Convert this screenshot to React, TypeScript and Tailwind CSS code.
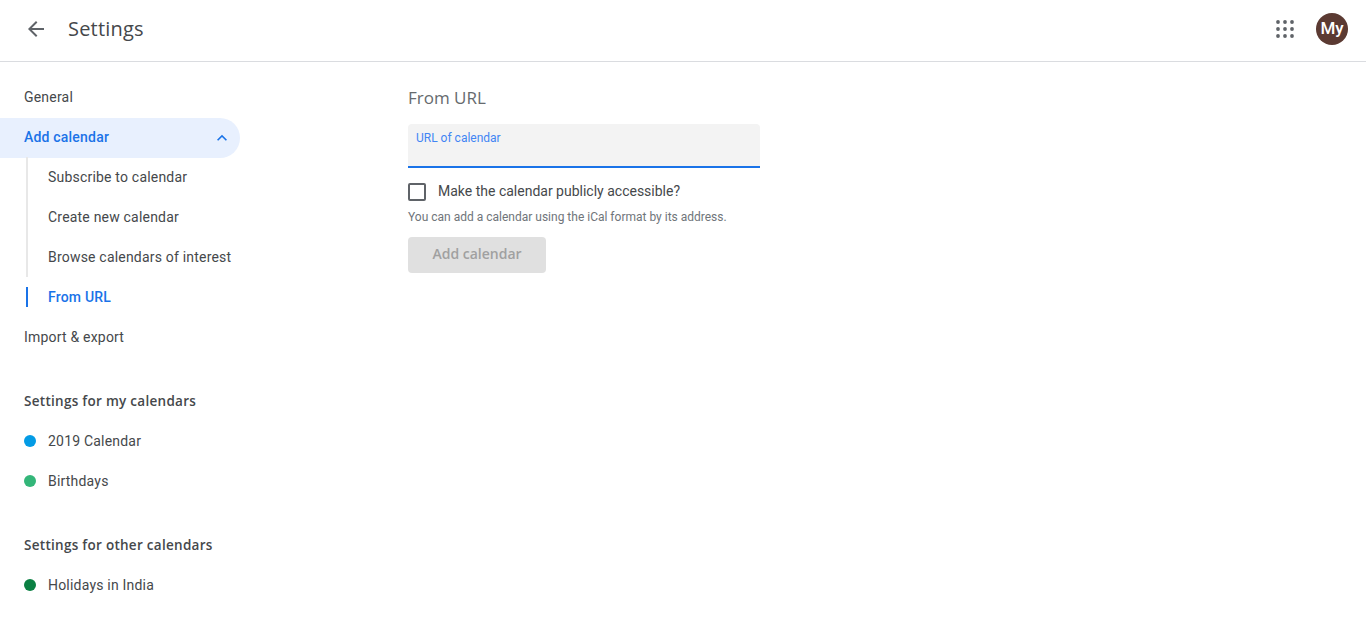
import React, { FC } from "react";

const NavLink: FC<{ label: string }> = ({ label }) => (
  <div className="flex h-10 w-60 items-center pl-6 text-[14px] tracking-[0.2px] text-[#45484b]">{label}</div>
);

const SubLink: FC<{ label: string; active?: boolean }> = ({ label, active }) => (
  <div className="flex h-10 items-center">
    <div className={active ? "h-5 w-0.5 bg-[#1a73e8]" : "h-10 w-0.5 bg-[#e8e8e8]"} />
    <span
      className={
        active
          ? "ml-5 text-[14px] font-medium tracking-[0.2px] text-[#1a73e8]"
          : "ml-5 text-[14px] tracking-[0.2px] text-[#45484b]"
      }
    >
      {label}
    </span>
  </div>
);

const SectionTitle: FC<{ label: string }> = ({ label }) => (
  <div className="mt-6 flex h-10 items-center pl-6 font-['Open_Sans',sans-serif] text-[13.5px] font-semibold tracking-[0.28px] text-[#45484b]">
    {label}
  </div>
);

const CalendarLink: FC<{ label: string; color: string }> = ({ label, color }) => (
  <div className="flex h-10 items-center pl-6 text-[14px] tracking-[0.2px] text-[#45484b]">
    <span className={`mr-3 h-3 w-3 rounded-full ${color}`} />
    {label}
  </div>
);

const AppsIcon: FC = () => (
  <svg width="18" height="18" viewBox="0 0 18 18" fill="#5f6368">
    {[2, 9, 16].map((y) =>
      [2, 9, 16].map((x) => <circle key={`${x}-${y}`} cx={x} cy={y} r="1.9" />)
    )}
  </svg>
);

export default function App() {
  return (
    <div className="h-[617px] w-[1366px] overflow-hidden bg-white font-['Roboto',sans-serif]">
      <header className="flex h-[62px] items-center border-b border-[#dadce0] pb-[3px] pl-6 pr-[18px]">
        <svg width="24" height="24" viewBox="0 0 24 24" fill="#5f6368">
          <path d="M20 11H7.83l5.59-5.59L12 4l-8 8 8 8 1.41-1.41L7.83 13H20v-2z" />
        </svg>
        <h1 className="ml-5 font-['Open_Sans',sans-serif] text-[20px] tracking-[0.2px] text-[#45484b]">Settings</h1>
        <div className="ml-auto flex items-center gap-[22px]">
          <AppsIcon />
          <div className="flex h-8 w-8 items-center justify-center rounded-full bg-[#5b3a32] text-[17px] font-medium text-white">
            My
          </div>
        </div>
      </header>

      <div className="flex">
        <nav className="w-[408px] shrink-0 pt-[15px]">
          <NavLink label="General" />
          <div className="mt-px flex h-10 w-60 items-center justify-between rounded-r-full bg-[#e8f0fe] pl-6 pr-2 text-[14px] font-medium tracking-[0.2px] text-[#1a73e8]">
            <span className="pb-0.5">Add calendar</span>
            <svg width="20" height="20" viewBox="0 0 24 24" fill="currentColor">
              <path d="M12 8l-6 6 1.41 1.41L12 10.83l4.59 4.58L18 14z" />
            </svg>
          </div>
          <div className="ml-[26px] -mt-px">
            <SubLink label="Subscribe to calendar" />
            <SubLink label="Create new calendar" />
            <SubLink label="Browse calendars of interest" />
            <SubLink label="From URL" active />
          </div>
          <NavLink label="Import & export" />
          <SectionTitle label="Settings for my calendars" />
          <CalendarLink label="2019 Calendar" color="bg-[#039be5]" />
          <CalendarLink label="Birthdays" color="bg-[#33b679]" />
          <SectionTitle label="Settings for other calendars" />
          <CalendarLink label="Holidays in India" color="bg-[#0b8043]" />
        </nav>

        <main className="w-[352px] pt-[24px]">
          <h2 className="font-['Open_Sans',sans-serif] text-[17px] leading-6 text-[#666a6e]">From URL</h2>
          <div className="mt-[14px] h-11 rounded-t border-b-2 border-[#1a73e8] bg-[#f3f3f3] px-2 pt-1.5 text-[12px] leading-4 text-[#4285f4]">
            URL of calendar
          </div>
          <label className="mt-[14px] flex h-5 items-center text-[14px] text-[#45484b]">
            <span className="mr-3 h-[18px] w-[18px] rounded-[2px] border-2 border-[#5f6368]" />
            <span className="pb-0.5">Make the calendar publicly accessible?</span>
          </label>
          <p className="mt-[7px] text-[12px] leading-4 text-[#70757a]">
            You can add a calendar using the iCal format by its address.
          </p>
          <button className="mt-3 h-9 w-[138px] rounded bg-[#e0e0e0] pb-1 font-['Open_Sans',sans-serif] text-[14px] font-semibold text-[#a0a0a0]">
            Add calendar
          </button>
        </main>
      </div>
    </div>
  );
}
